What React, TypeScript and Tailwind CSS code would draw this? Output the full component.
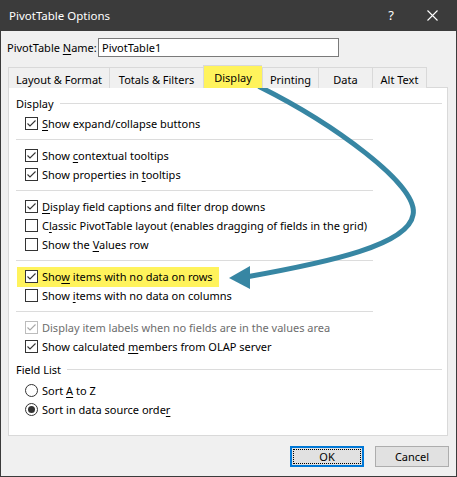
import React from "react";

function Check({ disabled }: { disabled?: boolean }) {
  return (
    <span
      className={
        "flex h-[13px] w-[13px] shrink-0 items-center justify-center border bg-white " +
        (disabled ? "border-[#bcbcbc]" : "border-[#333333]")
      }
    >
      <svg width="11" height="11" viewBox="0 0 11 11">
        <polyline
          points="1.5,5.5 4,8 9.5,2.5"
          fill="none"
          stroke={disabled ? "#a6a6a6" : "#333333"}
          strokeWidth="1.1"
        />
      </svg>
    </span>
  );
}

function Box() {
  return <span className="h-[13px] w-[13px] shrink-0 border border-[#333333] bg-white" />;
}

function Radio({ on }: { on?: boolean }) {
  return (
    <span className="flex h-[13px] w-[13px] shrink-0 items-center justify-center rounded-full border border-[#333333] bg-white">
      {on && <span className="h-[7px] w-[7px] rounded-full bg-[#333333]" />}
    </span>
  );
}

function Row({ icon, children, gray }: { icon: React.ReactNode; children: React.ReactNode; gray?: boolean }) {
  return (
    <div className={"flex h-[19px] items-center pl-[16px] " + (gray ? "text-[#6d6d6d]" : "")}>
      {icon}
      <span className="ml-[4px] whitespace-nowrap">{children}</span>
    </div>
  );
}

function Sep() {
  return (
    <div className="flex h-[13px] items-center pl-[7px]">
      <div className="h-px w-[357px] bg-[#dcdcdc]" />
    </div>
  );
}

function GroupLabel({ text }: { text: string }) {
  return (
    <div className="flex h-[16px] items-center pl-[7px] pr-[5px]">
      <span>{text}</span>
      <div className="ml-[6px] h-px flex-1 bg-[#dcdcdc]" />
    </div>
  );
}

const tabs = [
  { label: "Layout & Format", w: "w-[101px]" },
  { label: "Totals & Filters", w: "w-[94px]" },
  { label: "Display", w: "w-[59px]", active: true },
  { label: "Printing", w: "w-[56px]" },
  { label: "Data", w: "w-[54px]" },
  { label: "Alt Text", w: "w-[55px]" },
];

export default function App() {
  return (
    <div
      className="relative h-[477px] w-[457px] overflow-hidden border-x border-b border-[#3b3b3b] bg-[#f0f0f0] text-[11px] leading-none text-black"
      style={{ fontFamily: '"Noto Sans", "Open Sans", sans-serif' }}
    >
      {/* title bar */}
      <div className="flex h-[31px] items-center bg-[#3b3b3b] pl-[8px] text-white">
        <span className="text-[11.5px]">PivotTable Options</span>
        <span className="ml-auto mr-[33px] text-[13px]">?</span>
        <svg width="11" height="11" viewBox="0 0 11 11" className="mr-[18px]">
          <path d="M0.5 0.5 L10.5 10.5 M10.5 0.5 L0.5 10.5" stroke="#ffffff" strokeWidth="1.1" />
        </svg>
      </div>

      {/* name */}
      <div className="mt-[7px] flex h-[19px] items-center pl-[6px]">
        <span className="w-[91px] whitespace-nowrap">
          PivotTable <span className="underline underline-offset-2">N</span>ame:
        </span>
        <div className="flex h-[19px] w-[241px] items-center border border-[#7a7a7a] bg-white pl-[3px]">
          PivotTable1
        </div>
      </div>

      {/* tabs */}
      <div className="relative z-10 mt-[9px] -mb-px flex h-[22px] items-end pl-[7px]">
        {tabs.map((t, i) => (
          <div
            key={t.label}
            className={
              "flex items-center justify-center whitespace-nowrap border-t border-l border-[#d9d9d9] " +
              t.w +
              (i === tabs.length - 1 ? " border-r" : "") +
              (t.active ? " h-[23px] bg-[#fff35c]" : " h-[21px] bg-[#f0f0f0] pt-[2px]")
            }
          >
            {t.label}
          </div>
        ))}
      </div>

      {/* panel */}
      <div className="ml-[7px] h-[349px] w-[440px] border border-[#d9d9d9] bg-white pt-[7px]">
        <GroupLabel text="Display" />
        <div className="mt-[3px]">
          <Row icon={<Check />}>
            <span className="underline underline-offset-2">S</span>how expand/collapse buttons
          </Row>
          <Sep />
          <Row icon={<Check />}>
            Show <span className="underline underline-offset-2">c</span>ontextual tooltips
          </Row>
          <Row icon={<Check />}>
            Show properties in <span className="underline underline-offset-2">t</span>ooltips
          </Row>
          <Sep />
          <Row icon={<Check />}>
            <span className="underline underline-offset-2">D</span>isplay field captions and filter drop downs
          </Row>
          <Row icon={<Box />}>
            C<span className="underline underline-offset-2">l</span>assic PivotTable layout (enables dragging of fields in the grid)
          </Row>
          <Row icon={<Box />}>
            Show the <span className="underline underline-offset-2">V</span>alues row
          </Row>
          <Sep />
          <div className="flex h-[19px] items-center pl-[8px]">
            <div className="flex h-[20px] items-center bg-[#fff35c] pl-[8px] pr-[6px]">
              <Check />
              <span className="ml-[4px] whitespace-nowrap">
                Sho<span className="underline underline-offset-2">w</span> items with no data on rows
              </span>
            </div>
          </div>
          <Row icon={<Box />}>
            Show <span className="underline underline-offset-2">i</span>tems with no data on columns
          </Row>
          <Sep />
          <Row icon={<Check disabled />} gray>
            Display item labels when no fields are in the values area
          </Row>
          <Row icon={<Check />}>
            Show calculated <span className="underline underline-offset-2">m</span>embers from OLAP server
          </Row>
        </div>
        <div className="mt-[5px]">
          <GroupLabel text="Field List" />
        </div>
        <div className="mt-[4px]">
          <Row icon={<Radio />}>
            Sort <span className="underline underline-offset-2">A</span> to Z
          </Row>
          <Row icon={<Radio on />}>
            Sort in data source orde<span className="underline underline-offset-2">r</span>
          </Row>
        </div>
      </div>

      {/* buttons */}
      <div className="mt-[10px] flex justify-end gap-[11px] pr-[7px]">
        <button className="flex h-[21px] w-[74px] items-center justify-center border-2 border-[#0078d7] bg-[#e1e1e1] p-[1px]">
          <span className="flex h-full w-full items-center justify-center border border-dotted border-black">OK</span>
        </button>
        <button className="flex h-[21px] w-[74px] items-center justify-center border border-[#adadad] bg-[#e1e1e1]">
          Cancel
        </button>
      </div>

      {/* annotation arrow */}
      <svg className="pointer-events-none absolute left-[-1px] top-0" width="457" height="477" viewBox="0 0 457 477">
        <path
          d="M260 87 C330 122, 420 185, 413 215 C408 245, 330 262, 246 277"
          fill="none"
          stroke="#3786a3"
          strokeWidth="5"
          strokeLinecap="round"
        />
        <polygon points="229,278 250,266 250,289" fill="#3786a3" />
      </svg>
    </div>
  );
}
